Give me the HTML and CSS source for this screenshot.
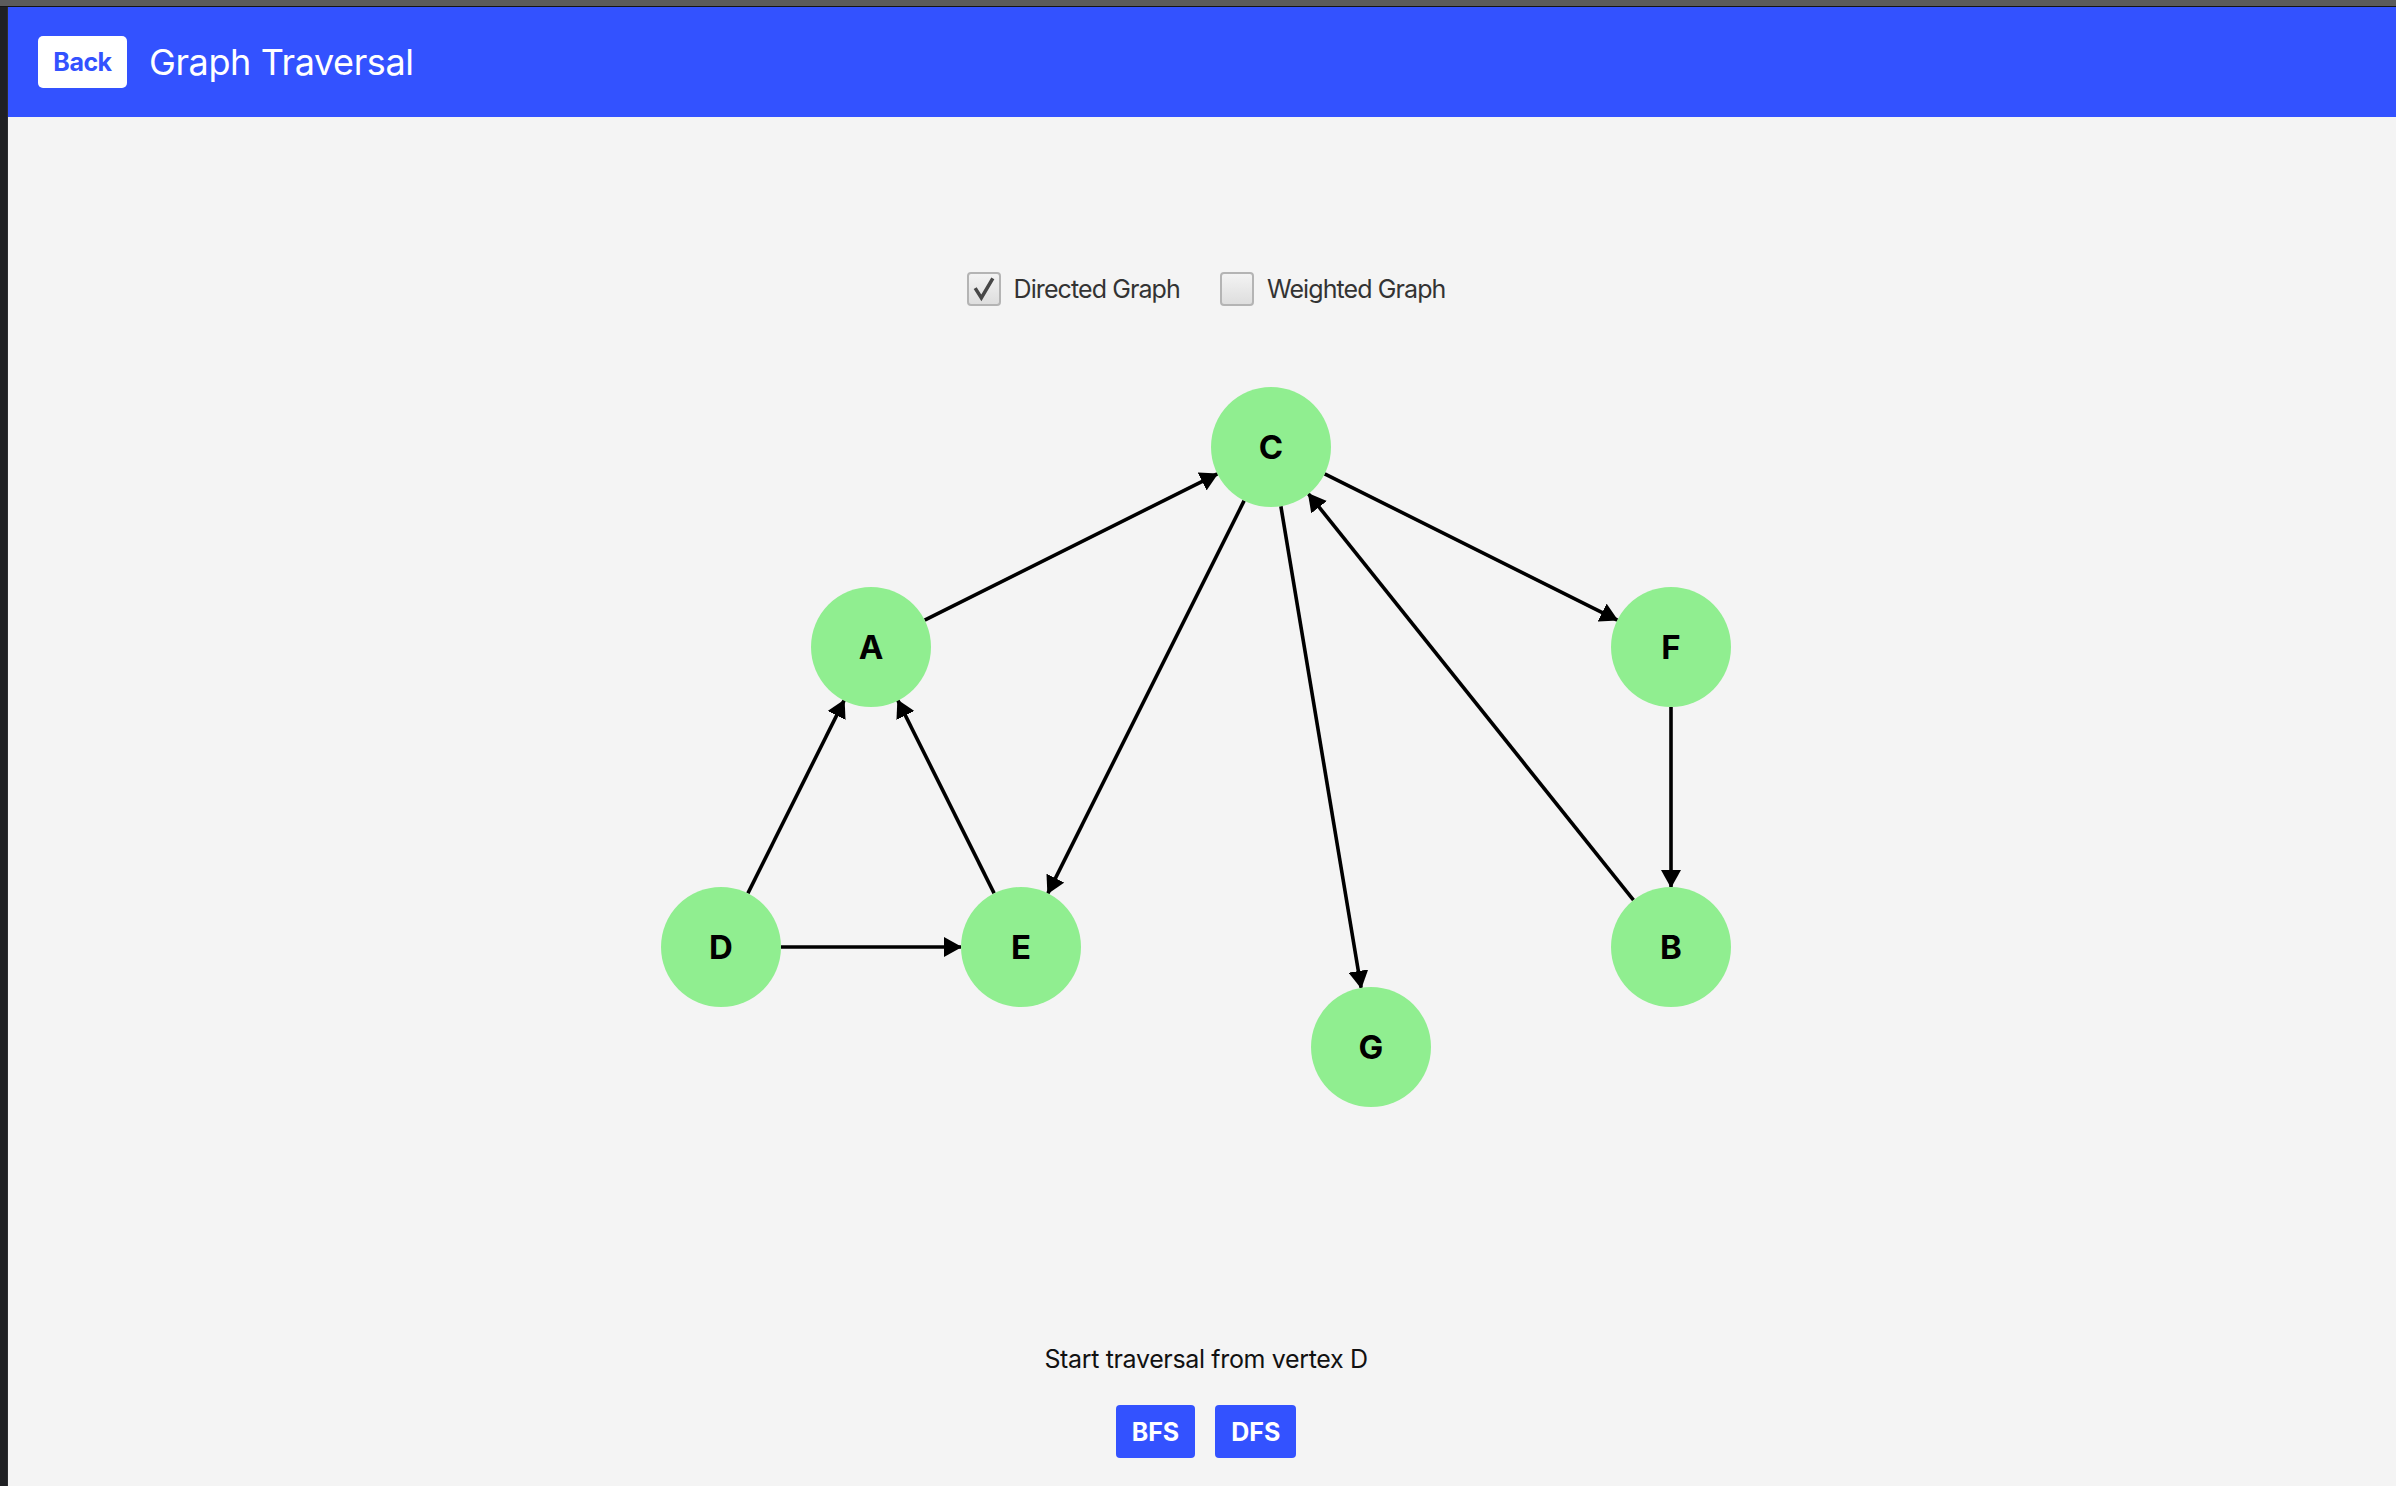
FILE: index.html
```html
<!DOCTYPE html>
<html lang="en">
<head>
<meta charset="utf-8">
<title>Graph Traversal</title>
<link rel="stylesheet" href="styles.css">
</head>
<body>
<div class="topstrip"></div>
<div class="frame">
  <div class="sidestrip"></div>
  <div class="main">
    <header class="header">
      <button class="back-btn">Back</button>
      <h1 class="title">Graph Traversal</h1>
    </header>
    <section class="content">
      <div class="options">
        <label class="option">
          <span class="box">
            <svg class="tick" viewBox="0 0 34 34"><path d="M7 16 L14 27 L27 5" fill="none" stroke="#474747" stroke-width="4" stroke-linejoin="miter" stroke-linecap="butt"/></svg>
          </span>
          <span class="option-text">Directed Graph</span>
        </label>
        <label class="option">
          <span class="box"></span>
          <span class="option-text">Weighted Graph</span>
        </label>
      </div>
      <svg class="graph" width="2388" height="800" viewBox="8 330 2388 800">
        <defs>
          <marker id="arrow" markerUnits="userSpaceOnUse" viewBox="0 0 20 20" markerWidth="20" markerHeight="20" refX="17" refY="10" orient="auto">
            <path d="M0,0 L18,10 L0,20 z" fill="#000"/>
          </marker>
        </defs>
        <g class="edges" stroke="#000" stroke-width="3.6" marker-end="url(#arrow)">
          <line x1="924.67" y1="620.17" x2="1217.33" y2="473.83"/>
          <line x1="1244.17" y1="500.67" x2="1047.83" y2="893.33"/>
          <line x1="1280.86" y1="506.18" x2="1361.14" y2="987.82"/>
          <line x1="1324.67" y1="473.83" x2="1617.33" y2="620.17"/>
          <line x1="1633.52" y1="900.15" x2="1308.48" y2="493.85"/>
          <line x1="1671" y1="707" x2="1671" y2="887"/>
          <line x1="747.83" y1="893.33" x2="844.17" y2="700.33"/>
          <line x1="994.17" y1="893.33" x2="897.83" y2="700.33"/>
          <line x1="781" y1="947" x2="961" y2="947"/>
        </g>
        <g class="nodes">
          <circle cx="1271" cy="447" r="60"/>
          <circle cx="871" cy="647" r="60"/>
          <circle cx="1671" cy="647" r="60"/>
          <circle cx="721" cy="947" r="60"/>
          <circle cx="1021" cy="947" r="60"/>
          <circle cx="1671" cy="947" r="60"/>
          <circle cx="1371" cy="1047" r="60"/>
        </g>
        <g class="labels">
          <text x="1271" y="459">C</text>
          <text x="871" y="659">A</text>
          <text x="1671" y="659">F</text>
          <text x="721" y="959">D</text>
          <text x="1021" y="959">E</text>
          <text x="1671" y="959">B</text>
          <text x="1371" y="1059">G</text>
        </g>
      </svg>
      <p class="start-text">Start traversal from vertex D</p>
      <div class="actions">
        <button class="action-btn">BFS</button>
        <button class="action-btn">DFS</button>
      </div>
    </section>
  </div>
</div>
</body>
</html>
```
FILE: styles.css
```css
* { box-sizing: border-box; }
html, body {
  margin: 0;
  padding: 0;
  height: 100%;
  overflow: hidden;
}
body {
  font-family: Inter, "Noto Sans", "Liberation Sans", sans-serif;
  background: #f4f4f4;
}
.topstrip {
  height: 7px;
  background: #5b5b5b;
  border-bottom: 1px solid #151515;
}
.frame {
  display: flex;
  height: calc(100% - 7px);
}
.sidestrip {
  width: 8px;
  flex: none;
  background: #1f2023;
  border-right: 1px solid #2c2d30;
}
.main {
  flex: 1;
  display: flex;
  flex-direction: column;
  background: #f4f4f4;
}
.header {
  height: 110px;
  background: #3352ff;
  display: flex;
  align-items: center;
  padding-left: 30px;
  gap: 22px;
}
.back-btn {
  width: 89px;
  height: 52px;
  border: none;
  border-radius: 5px;
  background: #fff;
  color: #3352ff;
  font-family: inherit;
  font-size: 25px;
  font-weight: 700;
  letter-spacing: -0.5px;
  padding: 0;
}
.title {
  margin: 0;
  color: #fff;
  font-size: 36px;
  font-weight: 400;
  letter-spacing: -0.4px;
}
.content {
  display: flex;
  flex-direction: column;
  align-items: center;
  padding-top: 155px;
  padding-left: 8px;
}
.options {
  display: flex;
  gap: 40px;
  height: 34px;
  align-items: center;
}
.option {
  display: flex;
  align-items: center;
  gap: 13px;
}
.box {
  width: 34px;
  height: 34px;
  border: 2px solid #b4b4b4;
  border-radius: 4px;
  background: linear-gradient(#f3f3f3, #dedede);
  display: flex;
  align-items: center;
  justify-content: center;
}
.tick {
  width: 30px;
  height: 30px;
}
.option-text {
  color: #333;
  font-size: 25px;
  letter-spacing: -0.9px;
}
.graph {
  display: block;
  margin-top: 24px;
  margin-left: -8px;
  flex: none;
}
.nodes circle {
  fill: #90ee90;
}
.labels text {
  font-family: Inter, "Liberation Sans", sans-serif;
  font-weight: 700;
  font-size: 33px;
  text-anchor: middle;
  fill: #000;
}
.start-text {
  margin: 213px 0 0;
  font-size: 25px;
  line-height: 32px;
  color: #111;
  letter-spacing: -0.35px;
}
.actions {
  display: flex;
  gap: 20px;
  margin-top: 30px;
}
.action-btn {
  height: 53px;
  padding: 0 16px;
  border: none;
  border-radius: 4px;
  background: #3352ff;
  color: #fff;
  font-family: inherit;
  font-size: 25px;
  font-weight: 700;
}
```
